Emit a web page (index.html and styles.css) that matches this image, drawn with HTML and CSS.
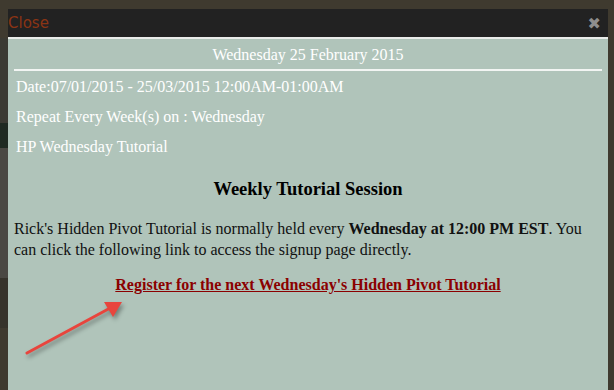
FILE: index.html
```html
<!DOCTYPE html>
<html lang="en">
<head>
    <meta charset="UTF-8">
    <title>Event</title>
    <link rel="stylesheet" href="styles.css">
</head>
<body>
    <div class="page">
        <div class="side"></div>
        <div class="dialog">
            <div class="dialog-bar">
                <span class="close-text">Close</span>
                <span class="close-x">&#10006;</span>
            </div>
            <div class="dialog-body">
                <div class="event-date">Wednesday 25 February 2015</div>
                <p class="meta">Date:07/01/2015 - 25/03/2015 12:00AM-01:00AM</p>
                <p class="meta">Repeat Every Week(s) on : Wednesday</p>
                <p class="meta">HP Wednesday Tutorial</p>

                <h3 class="session-title">Weekly Tutorial Session</h3>
                <p class="desc">Rick's Hidden Pivot Tutorial is normally held every <b>Wednesday at 12:00 PM EST</b>. You can click the following link to access the signup page directly.</p>
                <p class="link-row"><a href="#">Register for the next Wednesday's Hidden Pivot Tutorial</a></p>

                <svg class="arrow" width="110" height="70" viewBox="0 0 110 70">
                    <line x1="11" y1="63" x2="96" y2="17" stroke="#e8453d" stroke-width="3" stroke-linecap="round"/>
                    <polygon points="106,12 88,12 97,27" fill="#e8453d"/>
                </svg>
            </div>
        </div>
    </div>
</body>
</html>
```

FILE: styles.css
```css
body {
    margin: 0;
    background-color: #3f3a2f;
    font-family: "Liberation Serif", serif;
}
.page {
    display: flex;
    height: 390px;
    overflow: hidden;
}
.side {
    width: 8px;
    flex-shrink: 0;
    margin-top: 38px;
    height: 290px;
    background: linear-gradient(#3b3a33 0, #3b3a33 85px, #1f2a22 85px, #1f2a22 110px, #4a4843 110px, #4a4843 240px, #36332b 240px);
}
.dialog {
    width: 600px;
    margin-top: 9px;
    display: flex;
    flex-direction: column;
}
.dialog-bar {
    height: 28px;
    background-color: #222222;
    border-bottom: 2px solid #e9ece9;
    display: flex;
    justify-content: space-between;
    align-items: center;
}
.close-text {
    font-family: "DejaVu Sans", sans-serif;
    font-size: 15px;
    color: #8b3414;
}
.close-x {
    font-family: "DejaVu Sans", sans-serif;
    font-size: 16px;
    font-weight: bold;
    color: #8e8e8e;
    margin-right: 7px;
}
.dialog-body {
    position: relative;
    flex-grow: 1;
    background-color: #b0c4ba;
    padding: 0 6px;
    color: #fff;
    font-size: 16px;
}
.event-date {
    text-align: center;
    padding: 7px 0 5px;
    border-bottom: 2px solid #f2f5f3;
}
.meta {
    margin: 7px 0 0 2px;
    line-height: 23px;
}
.meta:first-of-type {
    margin-top: 4px;
}
.session-title {
    color: #000;
    text-align: center;
    font-size: 18.5px;
    margin: 21px 0 0;
}
.desc {
    color: #111;
    margin: 18px 0 0;
    line-height: 21px;
}
.link-row {
    text-align: center;
    margin: 16px 0 0;
}
.link-row a {
    color: #8b0000;
    font-weight: bold;
}
.arrow {
    position: absolute;
    left: 8px;
    top: 251px;
    filter: drop-shadow(2px 3px 2px rgba(0, 0, 0, 0.35));
}
```
